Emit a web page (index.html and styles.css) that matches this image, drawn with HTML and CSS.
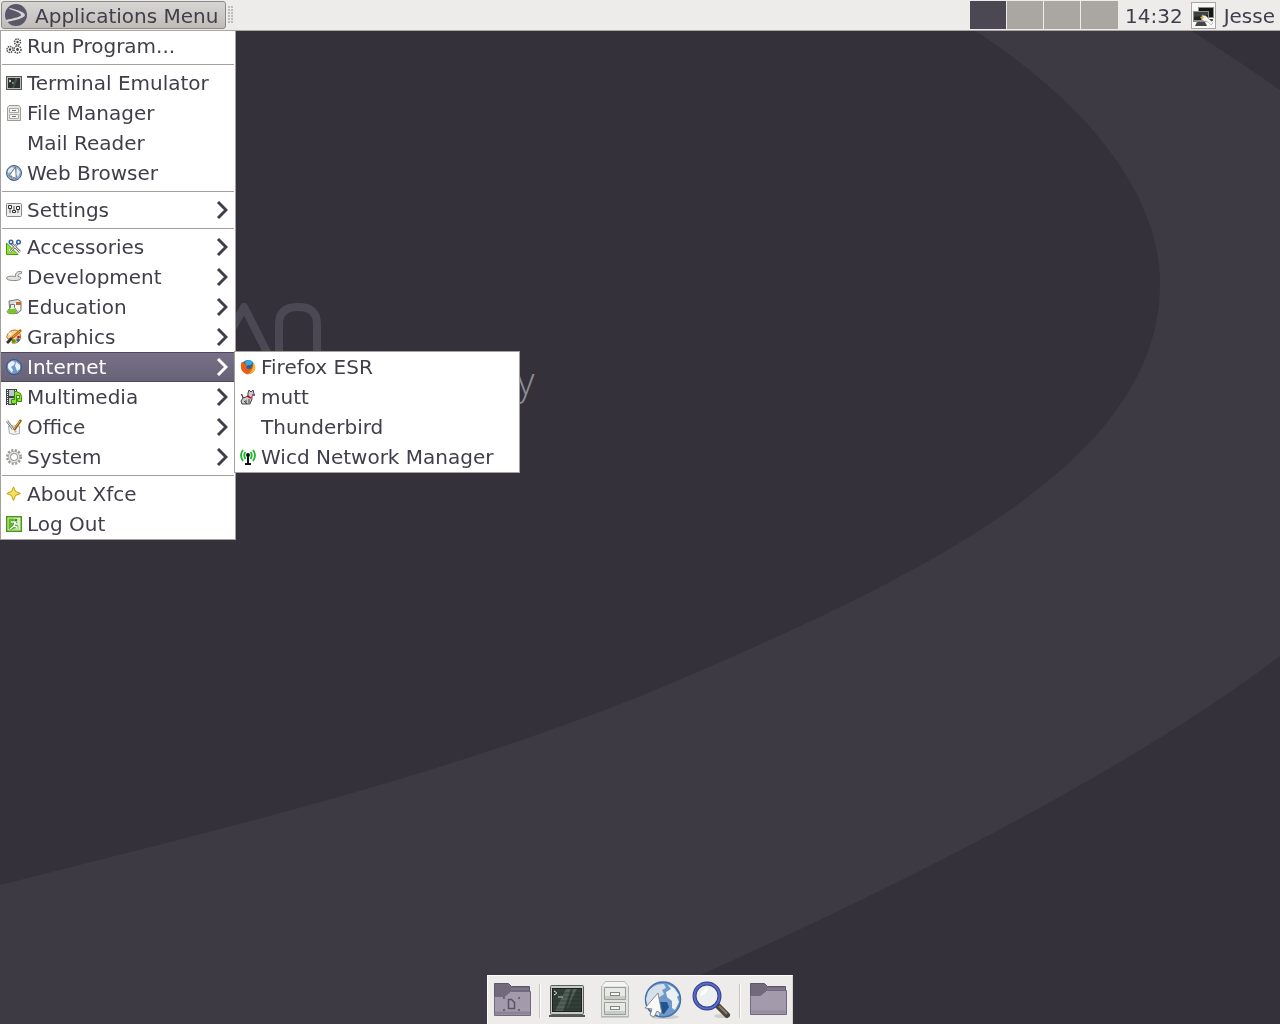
FILE: index.html
```html
<!DOCTYPE html>
<html lang="en">
<head>
<meta charset="utf-8">
<title>Desktop</title>
<link rel="stylesheet" href="styles.css">
</head>
<body>
<svg class="wallpaper" viewBox="0 0 1280 1024" preserveAspectRatio="xMidYMid slice" aria-hidden="true">
  <rect width="1280" height="1024" fill="#34313b"/>
  <path fill="#3d3a44" d="M925 0C1080 88 1160 190 1160 283C1160 450 960 560 681 679C480 766 240 825 0 885V1024H590Q1070 816 1280 656V90Q1220 48 1143 0Z"/>
  <g fill="none" stroke="#4b4854" stroke-width="8" stroke-linejoin="round">
    <path d="M220 351L244 307L269 356"/>
    <path d="M279 356V324Q279 307 298 307Q317 307 317 324V356"/>
  </g>
  <text class="motto" x="517" y="395">y</text>
</svg>

<div class="desktop">
  <header class="panel">
    <button class="apps" type="button">
      <svg width="22" height="22" viewBox="0 0 22 22"><circle cx="11" cy="11" r="11" fill="#5a5768"/><path d="M5 4C12 6 20 8 20 11C20 14 11 16 2 18L1 16C9 14 16 13 16 11C16 9 11 7 4 5Z" fill="#d4d3d6"/></svg>
      <span>Applications Menu</span>
    </button>
    <span class="handle"></span>
    <div class="pager">
      <button type="button" class="on" aria-label="Workspace 1"></button>
      <button type="button" aria-label="Workspace 2"></button>
      <button type="button" aria-label="Workspace 3"></button>
      <button type="button" aria-label="Workspace 4"></button>
    </div>
    <time class="clock">14:32</time>
    <button class="tray" type="button" aria-label="Network">
      <svg width="23" height="25" viewBox="0 0 23 25"><rect x="6" y="4" width="16" height="11" fill="#8b8e8a"/><rect x="7" y="5" width="14" height="9" fill="#151716"/><path d="M14 16h7v2h-7z" fill="#555"/><rect x="1" y="8" width="16" height="11" fill="#8b8e8a"/><rect x="2" y="9" width="14" height="8" fill="#202322"/><path d="M2 9h14v3L2 14z" fill="#3c413e"/><path d="M5 19h8l2 4H3z" fill="#444"/><path d="M10 12l4 1l4 4l3 3l-2 2l-3-3l-4-1l-3-2l2-1z" fill="#f4f2ee" stroke="#999" stroke-width=".5"/><path d="M8 14l3-1l1 2l-2 1z" fill="#e9b13c"/></svg>
    </button>
    <span class="user">Jesse</span>
  </header>

  <nav class="menu main" aria-label="Applications">
    <button type="button"><svg viewBox="0 0 16 16"><g fill="#fff" stroke="#555" stroke-width="1.500" stroke-dasharray="1.500 .8"><circle cx="11.500" cy="4" r="3"/><circle cx="4" cy="11.500" r="3"/><circle cx="11.500" cy="11.500" r="3.500"/></g><g fill="#444"><circle cx="11.500" cy="4" r="1.200"/><circle cx="4" cy="11.500" r="1.200"/><circle cx="11.500" cy="11.500" r="1.400"/></g></svg><span>Run Program...</span></button>
    <hr>
    <button type="button"><svg viewBox="0 0 16 16"><rect y="1" width="16" height="14" fill="#555753"/><rect x="1" y="2" width="14" height="12" fill="#babdb6"/><rect x="2" y="3" width="12" height="10" fill="#2b3230"/><path d="M3 5l2 1l-2 1M6 8h3" stroke="#eee" fill="none"/><path d="M9 3h3L8 13H6z" fill="#45504c"/></svg><span>Terminal Emulator</span></button>
    <button type="button"><svg viewBox="0 0 16 16"><path d="M1.500 2.500l1.500-2h10l1.500 2v13h-13z" fill="#e5e7e3" stroke="#999b96"/><path d="M3.500 3.500h9v4h-9zM3.500 9.500h9v4h-9z" fill="#f5f5f4" stroke="#a8aaa5"/><path d="M6 5.500h4M6 11.500h4" stroke="#777"/></svg><span>File Manager</span></button>
    <button type="button"><svg viewBox="0 0 16 16"></svg><span>Mail Reader</span></button>
    <button type="button"><svg viewBox="0 0 16 16"><circle cx="8" cy="8" r="7.500" fill="#8eaccf" stroke="#3c5f91"/><path d="M2 5l4-3l2 1l-3 4l-3 1zM11 3l3 4l-2 5l-2-3z" fill="#e6ebef"/><path d="M9.500 2L3 11h3v4l2-3l2 2V10z" fill="#fff" stroke="#666" stroke-width=".8"/></svg><span>Web Browser</span></button>
    <hr>
    <button type="button"><svg viewBox="0 0 16 16"><rect x=".5" y="1.500" width="15" height="13" rx="1" fill="#eee" stroke="#888"/><path d="M4 5v6M8 4v6M12 5v6" stroke="#555"/><g fill="#fff" stroke="#333"><path d="M2.500 3.500h3v3h-3zM6.500 8.500h3v2h-3zM10.500 4.500h3v3h-3z"/></g></svg><span>Settings</span><svg class="arrow" viewBox="0 0 12 18"><path d="M2 1l8 8l-8 8"/></svg></button>
    <hr>
    <button type="button"><svg viewBox="0 0 16 16"><path d="M.5 4L12 15.500H.5z" fill="#8ae234" stroke="#4e9a06"/><path d="M3 10v3h4z" fill="#fff"/><path d="M5 4l9 9M12 4L4 13" stroke="#777" stroke-width="2.500"/><path d="M5 4l9 9M12 4L4 13" stroke="#eee"/><g fill="#fff" stroke="#3465a4" stroke-width="1.500"><circle cx="5" cy="3" r="1.800"/><circle cx="12.500" cy="3" r="1.800"/></g></svg><span>Accessories</span><svg class="arrow" viewBox="0 0 12 18"><path d="M2 1l8 8l-8 8"/></svg></button>
    <button type="button"><svg viewBox="0 0 16 16"><path d="M15.500 2.500C12 2 9 3.500 9.500 7.500C6 7 1 7 .5 9C.5 12 12 12.500 14.500 10C15.500 8.500 14 7.500 12 7.500C11.500 5.500 13 4.500 15.500 4.500z" fill="#e4e5e2" stroke="#888a85"/></svg><span>Development</span><svg class="arrow" viewBox="0 0 12 18"><path d="M2 1l8 8l-8 8"/></svg></button>
    <button type="button"><svg viewBox="0 0 16 16"><path d="M3 2l9-1.500l3 2v9l-4 3H4z" fill="#ddd" stroke="#777"/><path d="M8 4h6v7H8z" fill="#f4f4f4"/><path d="M10 3h5v3h-5z" fill="#c96a21"/><path d="M4.500 5.500h4v3l2.500 4c1 3-10 3-10 0l3.500-4z" fill="#e8f2df" stroke="#777"/><path d="M2.500 10h7.500l.5 3c-1 2-8 2-9 0z" fill="#73c920"/></svg><span>Education</span><svg class="arrow" viewBox="0 0 12 18"><path d="M2 1l8 8l-8 8"/></svg></button>
    <button type="button"><svg viewBox="0 0 16 16"><path d="M5 2C10-1 15 3 14.500 8C14.500 12 11 15 6 14C7 11 6 9 3 10C-1 10 1 4 5 2z" fill="#f3d09a" stroke="#b57112"/><circle cx="12" cy="11" r="1.800" fill="#3465a4"/><circle cx="8" cy="12" r="1.800" fill="#4e9a06"/><circle cx="4" cy="5" r="1.500" fill="#fff"/><circle cx="12.500" cy="8" r="1.300" fill="#cc0000"/><path d="M6 9l-5 5" stroke="#333" stroke-width="3"/><path d="M15 1L6 9" stroke="#b55b00" stroke-width="2.500"/><path d="M14 2L7 8" stroke="#fcaf3e"/></svg><span>Graphics</span><svg class="arrow" viewBox="0 0 12 18"><path d="M2 1l8 8l-8 8"/></svg></button>
    <button type="button" class="selected" aria-expanded="true"><svg viewBox="0 0 16 16"><circle cx="8" cy="8" r="7.500" fill="#6f9acb" stroke="#2f558e"/><path d="M2 5l4-3l3 1l-1 3l-3 2l2 3l-1 3l-4-5zM10 3l4 3v4l-3 2l-1-3l-1-2z" fill="#eef1f3"/></svg><span>Internet</span><svg class="arrow" viewBox="0 0 12 18"><path d="M2 1l8 8l-8 8"/></svg></button>
    <button type="button"><svg viewBox="0 0 16 16"><path d="M0 0h11v16H0z" fill="#444"/><path d="M3 1h5v6H3zM3 9h5v6H3z" fill="#b8c7d8"/><path d="M1.500 1v15M9.500 1v15" stroke="#fff" stroke-dasharray="1 1"/><path d="M8.500 2.500h2l4 2q1.500 2 1 8h-4v-3h2V6.500h-3v8h-5v-4h3z" fill="#8ae234" stroke="#3c9000"/></svg><span>Multimedia</span><svg class="arrow" viewBox="0 0 12 18"><path d="M2 1l8 8l-8 8"/></svg></button>
    <button type="button"><svg viewBox="0 0 16 16"><path d="M2.500 7h11v7.500q-5 2-10 0z" fill="#f3f3f2" stroke="#aaa"/><path d="M1 2l6 8" stroke="#777" stroke-width="2.500"/><path d="M1 2l6 8" stroke="#eee"/><path d="M15 1L8 11" stroke="#8f5902" stroke-width="2.500"/><path d="M14 2L8 10" stroke="#edb84a"/><path d="M8 11l3 1l-2 2z" fill="#dba89b"/></svg><span>Office</span><svg class="arrow" viewBox="0 0 12 18"><path d="M2 1l8 8l-8 8"/></svg></button>
    <button type="button"><svg viewBox="0 0 16 16"><circle cx="8" cy="8" r="6.500" fill="none" stroke="#999b96" stroke-width="3" stroke-dasharray="2 1.400"/><circle cx="8" cy="8" r="4.500" fill="#fff" stroke="#999b96" stroke-width="3"/><circle cx="8" cy="8" r="4.700" fill="none" stroke="#e2e3e0" stroke-width="1.600"/></svg><span>System</span><svg class="arrow" viewBox="0 0 12 18"><path d="M2 1l8 8l-8 8"/></svg></button>
    <hr>
    <button type="button"><svg viewBox="0 0 16 16"><path d="M7.500 .8L9.500 5.500L14.500 7.500L9.500 9.500L7.500 14.500L5.500 9.500L.8 7.500L5.500 5.500z" fill="#f7e15c" stroke="#c4a000"/></svg><span>About Xfce</span></button>
    <button type="button"><svg viewBox="0 0 16 16"><rect x=".7" y=".7" width="14.600" height="14.600" fill="#d9edc8" stroke="#459b0a" stroke-width="1.500"/><path d="M2.500 2.500h6v11h-6z" fill="#65b52c"/><circle cx="10" cy="4" r="1.300" fill="#3f8f10"/><path d="M5 6h4l-1 4l3 1v3M8 10l-4 3M9 6l1 2h2" fill="none" stroke="#3f8f10" stroke-width="2.500"/><path d="M5 6h4l-1 4l3 1v3M8 10l-4 3M9 6l1 2h2" fill="none" stroke="#fff" stroke-width="1.400"/></svg><span>Log Out</span></button>
  </nav>

  <nav class="menu sub" aria-label="Internet">
    <button type="button"><svg viewBox="0 0 16 16"><circle cx="8" cy="7.500" r="6.500" fill="#1e65b0"/><path d="M5 3Q9-1 13 3L11 6H6z" fill="#3aa7dd"/><path d="M1.500 3Q4 3 5 5L8 6L6 8Q7 11 10 10Q13 9 12 5Q17 8 14 12Q11 16 6 15Q-1 12 1.500 3z" fill="#e65f14"/><path d="M13 3Q17 8 14 12Q11 15 8 15Q14 11 13 3z" fill="#f9b52a"/></svg><span>Firefox ESR</span></button>
    <button type="button"><svg viewBox="0 0 16 16"><path d="M1.500 5l2 4L8 7V4l1-3l2 2l2-2l1 4l-2 2v3l-2 5H2l-1-3l2-3z" fill="#ccc" stroke="#444"/><path d="M7 7l4 2" stroke="#d00" stroke-width="1.500"/><path d="M12 6h3" stroke="#a5479d" stroke-width="2"/><path d="M4 12l3 3M6 11v3M9 10v4" stroke="#444"/></svg><span>mutt</span></button>
    <button type="button"><svg viewBox="0 0 16 16"></svg><span>Thunderbird</span></button>
    <button type="button"><svg viewBox="0 0 16 16"><g fill="none" stroke="#19b52a" stroke-width="1.800"><path d="M3 1Q-1 6 3 12M13 1Q17 6 13 12"/><path d="M5.500 3Q3 6 5.500 10M10.500 3Q13 6 10.500 10"/></g><circle cx="8" cy="6" r="2" fill="#111"/><path d="M8 6v9M5 15h6" stroke="#111" stroke-width="2"/></svg><span>Wicd Network Manager</span></button>
  </nav>

  <footer class="dock">
    <button type="button" aria-label="Show desktop"><svg viewBox="0 0 48 48"><path d="M6.500 7.500h14l3 3h18v25h-35z" fill="#706a7c" stroke="#5d586a"/><path d="M23 13h18" stroke="#8b8496"/><path d="M6.500 20.500h10l6-5h20v24h-36z" fill="#a39bab" stroke="#716a7c"/><path d="M7 37h35" stroke="#8c8496" stroke-width="3"/><path d="M20.500 23.500h3l3 3v6h-6z" fill="none" stroke="#5a5366" stroke-width="1.500"/><path d="M15 22h2M15 34h2M30 22h2M30 34h2" stroke="#6b6477" stroke-width="2"/></svg></button>
    <span class="divider"></span>
    <button type="button" aria-label="Terminal"><svg viewBox="0 0 48 48"><path d="M5 39h36v2H5z" fill="#555753"/><rect x="6.500" y="9.500" width="33" height="29" rx="1" fill="#c7c9c4" stroke="#5c5e5a"/><rect x="8.500" y="12.500" width="29" height="23" fill="#333d39" stroke="#1b211f"/><path d="M22 13h5l-8 22h-8zM29 13h4L23 33z" fill="#516058"/><path d="M10 15l3 2l-3 2M14 21h5" fill="none" stroke="#eee"/><path d="M9 17h28M9 21h28M9 25h28M9 29h28M9 33h28" stroke="#202824" stroke-opacity=".4"/></svg></button>
    <button type="button" aria-label="File manager"><svg viewBox="0 0 48 48"><path d="M9 40h28v2H9z" fill="#aaa" opacity=".5"/><path d="M9.500 10.500l4-5h19l4 5v30h-27z" fill="#dfe2dd" stroke="#b4b7b1"/><path d="M10 10h26l-4-4H14z" fill="#f4f5f3"/><g fill="#e7e9e5" stroke="#9a9e98"><path d="M12.500 11.500h21v12h-21zM12.500 26.500h21v12h-21z"/></g><path d="M13 20h20v3H13zM13 35h20v3H13z" fill="#c8ccc6"/><g fill="#f6f7f5" stroke="#80847e"><rect x="18.500" y="16.500" width="9" height="3"/><rect x="18.500" y="30.500" width="9" height="3"/></g></svg></button>
    <button type="button" aria-label="Web browser"><svg viewBox="0 0 48 48"><ellipse cx="25" cy="41" rx="14" ry="2" fill="#d0cecb"/><circle cx="23" cy="23.500" r="17.500" fill="#6d9acb" stroke="#4672aa" stroke-width="1.500"/><path d="M8 16Q14 7 24 8l2 4l-4 2l2 4l-6 4l-3 7l5 4l-1 7Q7 35 6 23z" fill="#d5e0ea"/><path d="M27 8l7 4l5 7l-2 2l2 5l-4 8l-3-2v-7l-5-4l-1-5l5-3z" fill="#eef1f3"/><path d="M18 26h9l2 5l-5 7l-6-2z" fill="#215391"/><path d="M18 17L5 32l7 1l-2 6l4 2l3-6l5 3z" fill="#f8f8f8" stroke="#888"/></svg></button>
    <button type="button" aria-label="Find applications"><svg viewBox="0 0 48 48"><ellipse cx="34" cy="40" rx="8" ry="2" fill="#d0cecb"/><path d="M28 28L39 39" stroke="#49443b" stroke-width="6" stroke-linecap="round"/><path d="M31 30l8 8" stroke="#887d6d" stroke-width="2"/><circle cx="19" cy="20" r="12.500" fill="#eceeef" stroke="#303e93" stroke-width="4"/><circle cx="19" cy="20" r="12.500" fill="none" stroke="#5a6cc0" stroke-width="2"/><path d="M12 20q1-7 8-8q-1 7-8 8" fill="#fff"/></svg></button>
    <span class="divider"></span>
    <button type="button" aria-label="Home folder"><svg viewBox="0 0 48 48"><path d="M6.500 7.500h14l3 3h18v25h-35z" fill="#706a7c" stroke="#5d586a"/><path d="M23 13h18" stroke="#8b8496"/><path d="M6.500 19.500h10l6-5h20v24h-36z" fill="#a39bab" stroke="#716a7c"/><path d="M7 36h35" stroke="#958da0" stroke-width="3"/></svg></button>
  </footer>
</div>
</body>
</html>
```
FILE: styles.css
```css
* { box-sizing: border-box; }

body {
  margin: 0;
  background: #34313b;
  color: #413e4b;
  font: 20px/30px "DejaVu Sans", sans-serif;
}

button {
  margin: 0;
  padding: 0;
  border: 0;
  background: none;
  color: inherit;
  font: inherit;
}

.wallpaper {
  position: fixed;
  inset: 0;
  width: 100%;
  height: 100%;
}

.motto {
  fill: #8f8d96;
  font: 300 38px "Open Sans", sans-serif;
}

.desktop {
  position: relative;
  display: flex;
  flex-direction: column;
  min-height: 100vh;
}

.panel {
  display: flex;
  align-items: center;
  height: 31px;
  padding: 0 5px 0 1px;
  border-bottom: 1px solid #a9a6a3;
  background: #edeceb;
}

.apps,
.clock,
.user { line-height: 32px; }

.apps {
  display: flex;
  align-items: center;
  gap: 8px;
  height: 28px;
  padding: 0 7px 0 3px;
  border: 1px solid #8d8a86;
  border-radius: 3px;
  background: linear-gradient(#d8d6d4, #bfbcb8);
  white-space: nowrap;
}

.apps span,
.clock,
.user { padding-top: 1px; }

.handle {
  width: 6px;
  height: 18px;
  margin: 0 auto 0 2px;
  background: radial-gradient(circle at 1px 1px, #bbb 1px, transparent 1px) 0 0 / 3px 3px;
}

.pager { display: flex; gap: 1px; }

.pager button {
  width: 36px;
  height: 28px;
  background: #aaa7a3;
}

.pager button:last-child { width: 37px; }

.pager .on { background: #4b4854; }

.clock { margin-left: 7px; }

.tray {
  display: flex;
  margin: 0 8px;
  border: 1px solid #aaa7a3;
  background: #f8f8f8;
}

.menu {
  position: absolute;
  display: flex;
  flex-direction: column;
  border: 1px solid #a3a09d;
  background: #fff;
}

.main {
  top: 31px;
  left: 0;
  width: 236px;
  border-top: 0;
}

.sub {
  top: 351px;
  left: 234px;
  width: 286px;
}

.menu button {
  display: flex;
  align-items: center;
  gap: 5px;
  height: 30px;
  padding: 0 7px 0 5px;
  text-align: left;
  white-space: nowrap;
}

.menu svg {
  flex: none;
  width: 16px;
  height: 16px;
}

.menu .arrow {
  width: 12px;
  height: 18px;
  margin-left: auto;
  fill: none;
  stroke: #413e4b;
  stroke-width: 3;
}

.menu .selected {
  background: linear-gradient(#787188, #676176);
  box-shadow: inset 0 1px #4e495c, inset 0 -1px #4e495c;
  color: #fff;
}

.menu .selected .arrow { stroke: #fff; }

.menu hr {
  width: calc(100% - 2px);
  height: 1px;
  margin: 3px 1px;
  border: 0;
  background: #a3a09d;
}

.dock {
  display: flex;
  align-self: center;
  margin-top: auto;
  border: 1px solid #fff;
  border-right-color: #d5d3d0;
  border-bottom: 0;
  background: #edeceb;
}

.dock button {
  width: 48px;
  height: 48px;
}

.dock svg { display: block; }

.divider {
  width: 2px;
  margin: 8px 3px 6px;
  border-left: 1px solid #c5c2bf;
  background: #fff;
}
```
